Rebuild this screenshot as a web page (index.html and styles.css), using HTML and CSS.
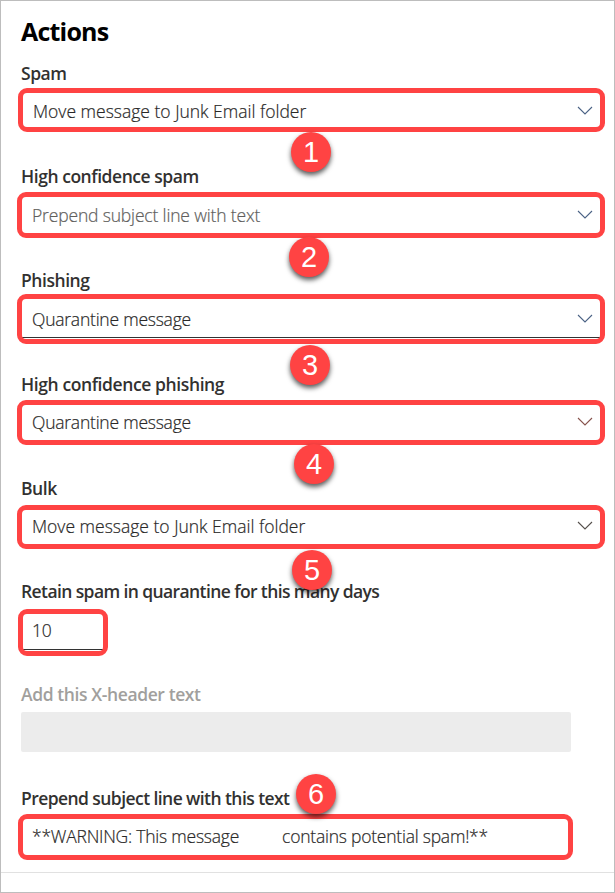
FILE: index.html
```
<!DOCTYPE html>
<html lang="en">
<head>
<meta charset="utf-8">
<title>Actions</title>
<link rel="stylesheet" href="styles.css">
</head>
<body>
<main class="panel">
  <h1 class="title"><span>Actions</span></h1>
  <section class="field f-spam">
    <div class="label"><span>Spam</span></div>
    <div class="control"><span class="value move">Move message to Junk Email folder</span><svg class="chevron" viewBox="0 0 16 9"><path d="M1 1l7 7 7-7"/></svg></div>
    <b class="badge">1</b>
  </section>
  <section class="field f-high">
    <div class="label"><span>High confidence spam</span></div>
    <div class="control"><span class="value muted">Prepend subject line with text</span><svg class="chevron" viewBox="0 0 16 9"><path d="M1 1l7 7 7-7"/></svg></div>
    <b class="badge">2</b>
  </section>
  <section class="field f-phish">
    <div class="label"><span>Phishing</span></div>
    <div class="control underlined"><span class="value quarantine">Quarantine message</span><svg class="chevron" viewBox="0 0 16 9"><path d="M1 1l7 7 7-7"/></svg></div>
    <b class="badge">3</b>
  </section>
  <section class="field f-highphish">
    <div class="label"><span>High confidence phishing</span></div>
    <div class="control"><span class="value quarantine">Quarantine message</span><svg class="chevron warm" viewBox="0 0 16 9"><path d="M1 1l7 7 7-7"/></svg></div>
    <b class="badge">4</b>
  </section>
  <section class="field f-bulk">
    <div class="label"><span>Bulk</span></div>
    <div class="control"><span class="value move">Move message to Junk Email folder</span><svg class="chevron dark" viewBox="0 0 16 9"><path d="M1 1l7 7 7-7"/></svg></div>
    <b class="badge">5</b>
  </section>
  <section class="field f-days">
    <div class="label"><span>Retain spam in quarantine for this many days</span></div>
    <div class="control underlined"><span class="value">10</span></div>
  </section>
  <section class="field f-header">
    <div class="label"><span>Add this X-header text</span></div>
    <div class="disabled"></div>
  </section>
  <section class="field f-subject">
    <div class="label"><span>Prepend subject line with this text</span></div>
    <div class="control"><span class="value warning">**WARNING: This message</span><span class="value contains">contains potential spam!**</span></div>
    <b class="badge">6</b>
  </section>
</main>
</body>
</html>
```
FILE: styles.css
```
* { box-sizing: border-box; }
body { margin: 0; background: #fff; font-family: "Open Sans", "Noto Sans", sans-serif; color: #323130; }
.panel {
  width: 615px; height: 893px; border: 1px solid #bdbdbd; overflow: hidden;
  display: grid; grid-template-rows: 60px 103px 104px 104px 104px 103px 103px 104px 86px 20px;
}
.title { margin: 0; padding: 12px 0 0 20px; font-size: 25px; line-height: 36px; font-weight: 700; color: #000; letter-spacing: -.8px; }
.field { position: relative; display: grid; grid-template-rows: var(--label, 28px) auto; align-content: start; }
.label { padding-left: 20px; font-size: 17.5px; line-height: 24px; font-weight: 600; white-space: nowrap; letter-spacing: var(--track, -.45px); }
.control {
  display: flex; align-items: flex-start; height: var(--h); margin-left: 16px; width: 588px;
  border: 5px solid #ff4343; border-radius: 9px; padding: var(--pad, 5px) 7px 0 10px; z-index: 1;
}
.value {
  font-size: 17.5px; line-height: 24px; font-weight: 300; color: #292827; white-space: pre;
  letter-spacing: -.23px; -webkit-text-stroke: .2px currentColor;
}
.move { letter-spacing: 0; }
.chevron { width: 16px; height: 9px; margin: 7px 0 0 auto; fill: none; stroke: #4b6285; stroke-width: 1.1; }
.warm { stroke: #87534c; }
.dark { stroke: #55504c; }
.muted { color: #605e5c; letter-spacing: -.16px; }
.underlined { background: linear-gradient(#333, #333) 0 calc(100% - 1px) / 100% 1px no-repeat; }
.badge {
  position: absolute; z-index: 2; left: var(--x); top: var(--y); width: 40px; height: 40px; border-radius: 50%;
  background: #ff4343; color: #fff; font: 400 29px/41px "Liberation Sans", Arial, sans-serif; text-align: center;
  box-shadow: 0 3px 5px rgba(0, 0, 0, .65);
}
.f-spam { --label: 27px; --h: 44px; --pad: 6px; --x: 290px; --y: 71px; }
.f-spam .control { margin-left: 17px; width: 587px; }
.f-high { --label: 28px; --h: 46px; --pad: 6px; --x: 288px; --y: 73px; }
.f-phish { --label: 26px; --h: 50px; --pad: 8px; --x: 289px; --y: 77px; }
.f-highphish { --label: 28px; --h: 45px; --x: 293px; --y: 72px; --track: -.4px; }
.f-bulk { --label: 29px; --h: 44px; --pad: 4px; --x: 291px; --y: 74px; }
.f-days { --label: 30px; --h: 47px; --pad: 4px; --track: -.6px; }
.f-days .control { margin-left: 17px; width: 90px; padding-left: 9px; }
.f-header { --label: 30px; --track: -.4px; color: #a19f9d; }
.disabled { margin-left: 20px; width: 550px; height: 40px; background: #ececec; border-radius: 2px; }
.f-subject { --label: 28px; --h: 46px; --x: 295px; --y: -12px; --track: -.57px; border-bottom: 1px solid #e1e1e1; height: 87px; }
.f-subject .control { margin-left: 17px; width: 555px; padding-left: 9px; }
.contains { margin-left: 43px; }
```
